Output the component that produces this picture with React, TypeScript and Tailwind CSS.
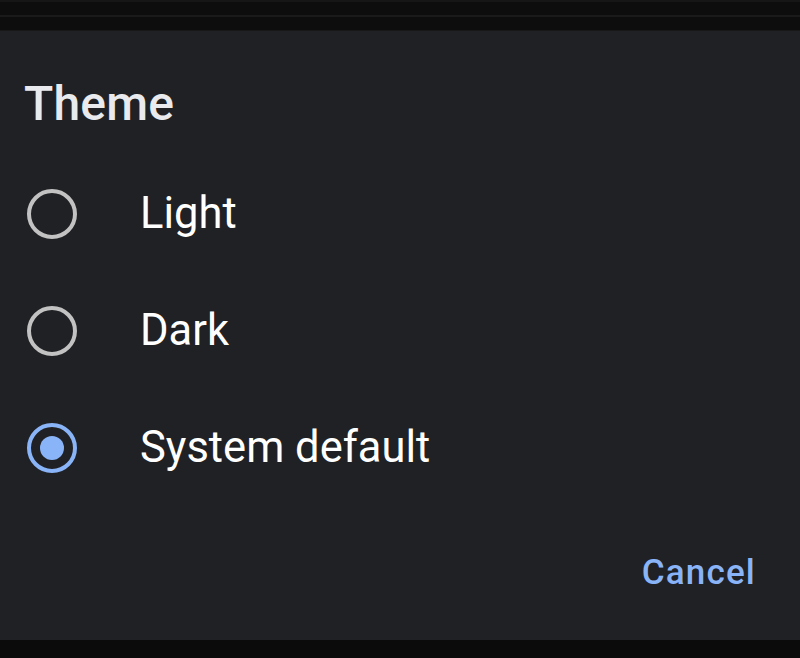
import React from "react";

const font = { fontFamily: "Roboto, 'Noto Sans', Arial, sans-serif" };

function Radio({ checked }: { checked: boolean }) {
  return (
    <div
      className={
        "w-[50px] h-[50px] rounded-full border-[4.5px] flex items-center justify-center shrink-0 " +
        (checked ? "border-[#8ab4f8]" : "border-[#c2c2c2]")
      }
    >
      {checked && <div className="w-[24px] h-[24px] rounded-full bg-[#8ab4f8]" />}
    </div>
  );
}

export default function App() {
  const items = [
    { label: "Light", checked: false },
    { label: "Dark", checked: false },
    { label: "System default", checked: true },
  ];
  return (
    <div className="w-[800px] h-[658px] flex flex-col bg-[#0c0c0c] overflow-hidden" style={font}>
      <div className="h-[31px] shrink-0 flex flex-col bg-[#0d0d0d]">
        <div className="h-[2px] bg-[#161616]" />
        <div className="h-[13px]" />
        <div className="h-[2px] bg-[#1a1a1a]" />
        <div className="h-[13px]" />
        <div className="h-[1px] bg-[#181818]" />
      </div>
      <div className="h-[609px] shrink-0 bg-[#202124] flex flex-col">
        <div className="pt-[49px] pl-[24px] text-[48px] leading-[48px] text-[#e8eaed] font-medium tracking-[0.2px]">
          Theme
        </div>
        <div className="mt-[27px] flex flex-col">
          {items.map((it) => (
            <div key={it.label} className="h-[117px] flex items-center pl-[27px]">
              <Radio checked={it.checked} />
              <span className="ml-[63px] text-[43.5px] leading-[44px] text-[#ffffff]">{it.label}</span>
            </div>
          ))}
        </div>
        <div className="mt-[49px] flex justify-end pr-[44px]">
          <span className="text-[35px] leading-[35px] font-medium text-[#8ab4f8] tracking-[1.2px]">Cancel</span>
        </div>
      </div>
      <div className="flex-1 bg-[#0b0b0b]" />
    </div>
  );
}
